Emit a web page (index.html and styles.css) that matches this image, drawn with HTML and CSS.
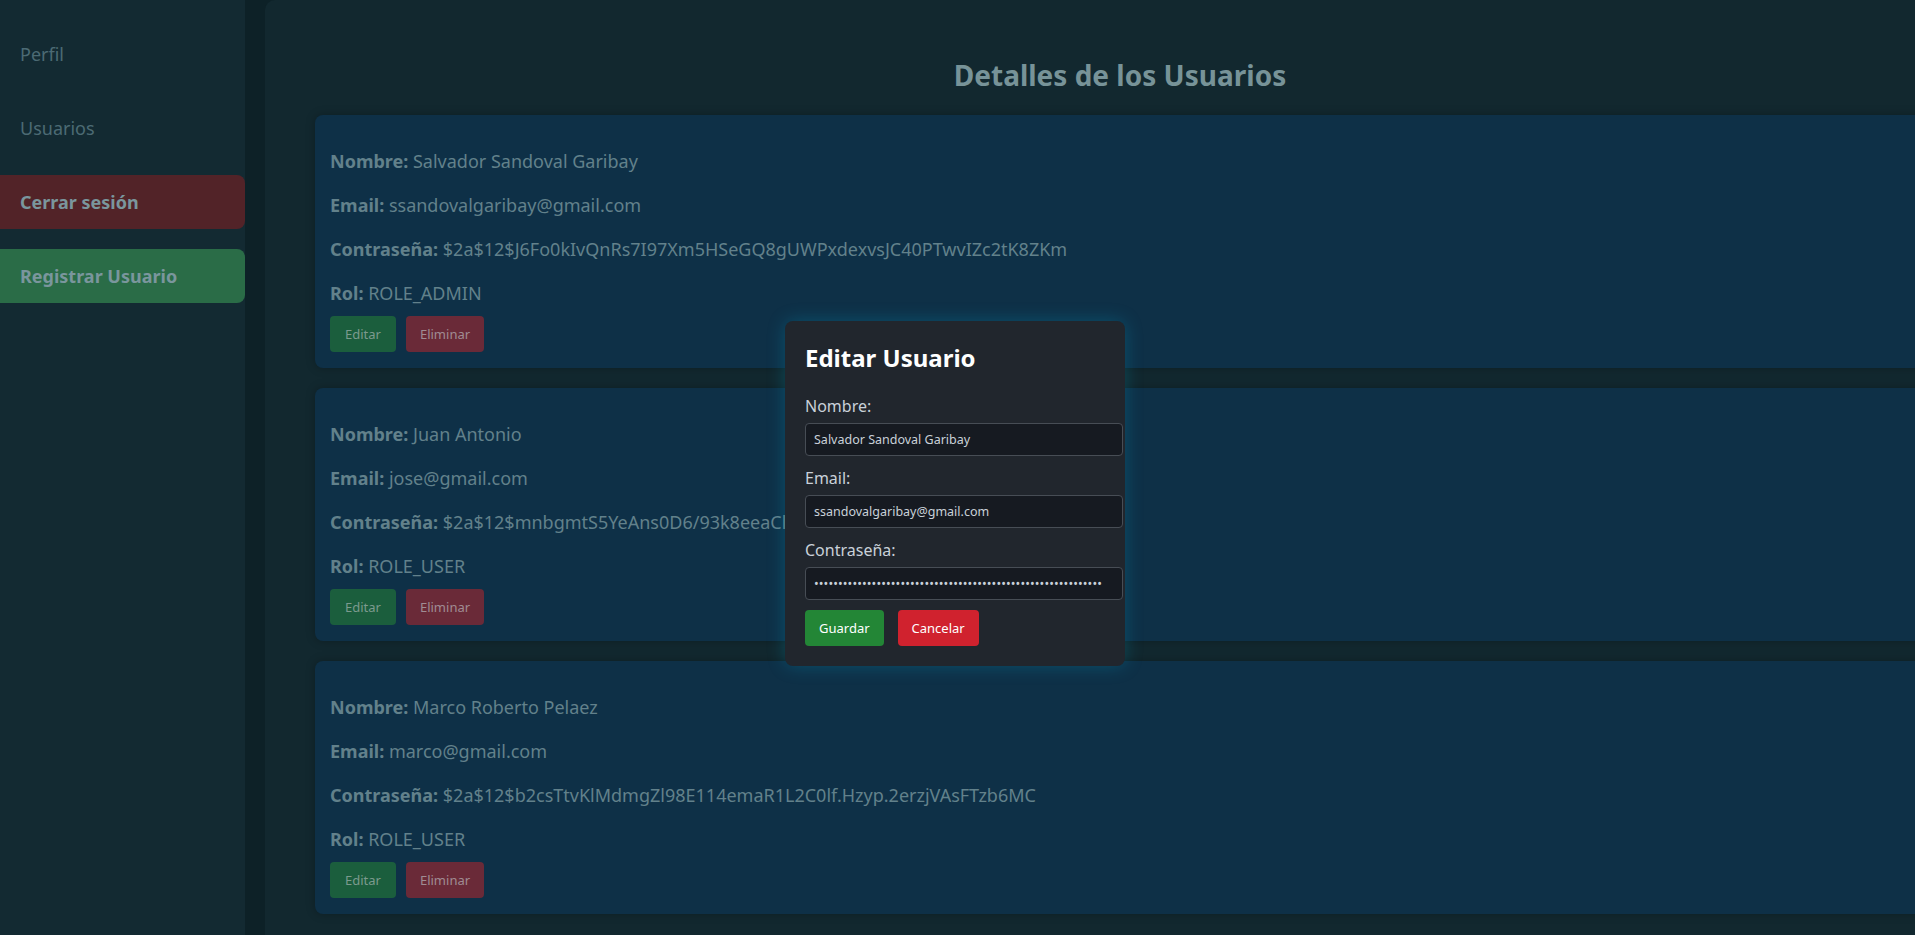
FILE: index.html
```html
<!DOCTYPE html>
<html lang="es">
<head>
<meta charset="utf-8">
<title>Detalles de los Usuarios</title>
<link rel="stylesheet" href="styles.css">
</head>
<body>
<div class="layout">
  <aside class="sidebar">
    <a class="nav-link" href="#">Perfil</a>
    <a class="nav-link" href="#">Usuarios</a>
    <a class="nav-btn nav-logout" href="#">Cerrar sesión</a>
    <a class="nav-btn nav-register" href="#">Registrar Usuario</a>
  </aside>
  <main class="main">
    <div class="content">
      <h1 class="page-title">Detalles de los Usuarios</h1>
      <div class="cards">
        <section class="card">
          <p><strong>Nombre:</strong> Salvador Sandoval Garibay</p>
          <p><strong>Email:</strong> ssandovalgaribay@gmail.com</p>
          <p><strong>Contraseña:</strong> $2a$12$J6Fo0kIvQnRs7I97Xm5HSeGQ8gUWPxdexvsJC40PTwvIZc2tK8ZKm</p>
          <p><strong>Rol:</strong> ROLE_ADMIN</p>
          <div class="card-actions">
            <button class="btn btn-edit">Editar</button>
            <button class="btn btn-delete">Eliminar</button>
          </div>
        </section>
        <section class="card">
          <p><strong>Nombre:</strong> Juan Antonio</p>
          <p><strong>Email:</strong> jose@gmail.com</p>
          <p><strong>Contraseña:</strong> $2a$12$mnbgmtS5YeAns0D6/93k8eeaClq2Yw7RrW5vJ0hTQz1mN8pLkXo6e</p>
          <p><strong>Rol:</strong> ROLE_USER</p>
          <div class="card-actions">
            <button class="btn btn-edit">Editar</button>
            <button class="btn btn-delete">Eliminar</button>
          </div>
        </section>
        <section class="card">
          <p><strong>Nombre:</strong> Marco Roberto Pelaez</p>
          <p><strong>Email:</strong> marco@gmail.com</p>
          <p><strong>Contraseña:</strong> $2a$12$b2csTtvKlMdmgZl98E114emaR1L2C0lf.Hzyp.2erzjVAsFTzb6MC</p>
          <p><strong>Rol:</strong> ROLE_USER</p>
          <div class="card-actions">
            <button class="btn btn-edit">Editar</button>
            <button class="btn btn-delete">Eliminar</button>
          </div>
        </section>
      </div>
    </div>
  </main>
</div>

<div class="modal">
  <h2 class="modal-title">Editar Usuario</h2>
  <form class="modal-form">
    <label class="field-label" for="f-nombre">Nombre:</label>
    <input class="field-input" id="f-nombre" type="text" value="Salvador Sandoval Garibay">
    <label class="field-label" for="f-email">Email:</label>
    <input class="field-input" id="f-email" type="email" value="ssandovalgaribay@gmail.com">
    <label class="field-label" for="f-pass">Contraseña:</label>
    <input class="field-input field-pass" id="f-pass" type="password" value="$2a$12$J6Fo0kIvQnRs7I97Xm5HSeGQ8gUWPxdexvsJC40PTwvIZc2tK8ZKm">
    <div class="modal-actions">
      <button type="button" class="mbtn mbtn-save">Guardar</button>
      <button type="button" class="mbtn mbtn-cancel">Cancelar</button>
    </div>
  </form>
</div>
</body>
</html>
```

FILE: styles.css
```css
* {
  box-sizing: border-box;
}

html, body {
  margin: 0;
  padding: 0;
  height: 100%;
  overflow: hidden;
}

body {
  background: #0d2127;
  font-family: "Noto Sans", "Open Sans", sans-serif;
  color: #62818b;
}

.layout {
  display: flex;
  gap: 20px;
  min-height: 100vh;
}

/* Sidebar */
.sidebar {
  flex: 0 0 245px;
  background: #132a32;
  display: flex;
  flex-direction: column;
  gap: 20px;
  padding-top: 27px;
}

.nav-link,
.nav-btn {
  display: flex;
  align-items: center;
  height: 54px;
  padding: 0 20px;
  font-size: 18px;
  text-decoration: none;
}

.nav-link {
  color: #4c6a74;
}

.nav-btn {
  font-weight: 700;
  color: #7a969d;
  border-radius: 0 8px 8px 0;
}

.nav-logout {
  background: #522328;
}

.nav-register {
  background: #2a6c47;
}

/* Main */
.main {
  flex: 0 0 auto;
  width: 1700px;
  background: #12282f;
  border-radius: 10px 0 0 0;
  padding-left: 50px;
}

.content {
  width: 1610px;
}

.page-title {
  margin: 53px 0 18px;
  text-align: center;
  font-size: 28px;
  font-weight: 700;
  line-height: 44px;
  color: #779398;
}

.cards {
  display: flex;
  flex-direction: column;
  gap: 20px;
}

.card {
  background: #0e3047;
  border-radius: 8px;
  padding: 15px 15px 16px;
  box-shadow: 0 0 10px rgba(0, 0, 0, 0.25);
}

.card p {
  margin: 18px 0 0;
  font-size: 18px;
  line-height: 26px;
  color: #62818b;
}

.card strong {
  font-weight: 700;
}

.card-actions {
  display: flex;
  gap: 10px;
  margin-top: 10px;
}

.btn {
  height: 36px;
  padding: 0 15px;
  border: none;
  border-radius: 4px;
  font-family: "Noto Sans", "Open Sans", sans-serif;
  font-size: 13px;
}

.btn-edit {
  background: #1b5e3d;
  color: #7c9a8e;
}

.btn-delete {
  background: #6a2a38;
  color: #a08c93;
  padding: 0 14px;
}

/* Modal */
.modal {
  position: absolute;
  left: 785px;
  top: 321px;
  width: 340px;
  padding: 20px;
  background: #21262d;
  border-radius: 8px;
  box-shadow: 0 0 18px rgba(0, 170, 210, 0.28);
  color: #c9d1d9;
}

.modal-title {
  margin: 0 0 20px;
  font-size: 24px;
  font-weight: 700;
  line-height: 33px;
  color: #ffffff;
}

.modal-form {
  display: flex;
  flex-direction: column;
  align-items: flex-start;
}

.field-label {
  display: block;
  font-size: 16px;
  line-height: 24px;
  margin-bottom: 5px;
  color: #c9d1d9;
}

.field-input {
  width: 318px;
  height: 33px;
  margin: 0 0 10px;
  padding: 0 8px;
  background: #161a21;
  border: 1px solid #474d55;
  border-radius: 4px;
  color: #c9d1d9;
  font-family: "Noto Sans", "Open Sans", sans-serif;
  font-size: 12.5px;
  outline: none;
}

.field-pass {
  letter-spacing: 0.1px;
}

.modal-actions {
  display: flex;
  gap: 14px;
}

.mbtn {
  height: 36px;
  padding: 0 14px;
  border: none;
  border-radius: 4px;
  color: #ffffff;
  font-family: "Noto Sans", "Open Sans", sans-serif;
  font-size: 13px;
}

.mbtn-save {
  background: #238636;
}

.mbtn-cancel {
  background: #d0222e;
}
```
